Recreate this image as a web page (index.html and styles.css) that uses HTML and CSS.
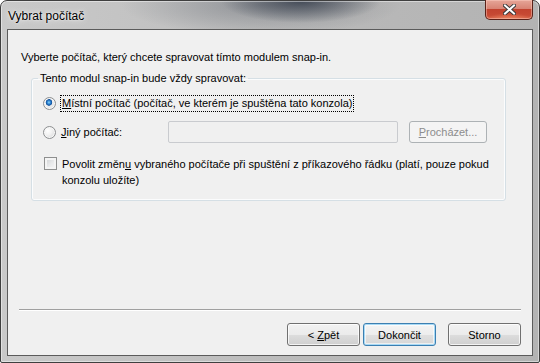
FILE: index.html
```html
<!DOCTYPE html>
<html lang="cs">
<head>
  <meta charset="UTF-8" />
  <title>Vybrat počítač</title>
  <link rel="stylesheet" href="styles.css">
</head>
<body>
  <div class="window">
    <div class="titlebar">
      <span class="title">Vybrat počítač</span>
      <button class="close" title="Zavřít">
        <svg width="13" height="11" viewBox="0 0 13 11">
          <path d="M2 1.5 L11 9.5 M11 1.5 L2 9.5" stroke="#3a3a3a" stroke-width="4" stroke-linecap="square" fill="none"/>
          <path d="M2 1.5 L11 9.5 M11 1.5 L2 9.5" stroke="#ffffff" stroke-width="2" stroke-linecap="square" fill="none"/>
        </svg>
      </button>
    </div>

    <div class="client">
      <p class="intro">Vyberte počítač, který chcete spravovat tímto modulem snap-in.</p>

      <!-- Which computer -->
      <fieldset class="group">
        <legend>Tento modul snap-in bude vždy spravovat:</legend>

        <div class="row row-local">
          <input type="radio" name="pc" id="local" checked>
          <label for="local" class="focused"><u>M</u>ístní počítač (počítač, ve kterém je spuštěna tato konzola)</label>
        </div>

        <div class="row row-other">
          <input type="radio" name="pc" id="other">
          <label for="other" class="other-label"><u>J</u>iný počítač:</label>
          <input type="text" class="textbox" disabled>
          <button class="btn btn-browse" disabled><u>P</u>rocházet...</button>
        </div>

        <div class="row row-check">
          <input type="checkbox" id="allow">
          <label for="allow" class="check-label">Povolit změn<u>u</u> vybraného počítače při spuštění z příkazového řádku (platí, pouze pokud konzolu uložíte)</label>
        </div>
      </fieldset>

      <div class="separator"></div>

      <div class="buttons">
        <button class="btn">&lt; <u>Z</u>pět</button>
        <button class="btn btn-default">Dokončit</button>
        <button class="btn btn-cancel">Storno</button>
      </div>
    </div>
  </div>
</body>
</html>
```

FILE: styles.css
```css
body {
  margin: 0;
  font-family: "Liberation Sans", Arial, sans-serif;
  font-size: 11px;
  color: #000;
  background: #fff;
}

.window {
  box-sizing: border-box;
  width: 540px;
  height: 363px;
  display: flex;
  flex-direction: column;
  padding: 0 6px 6px 6px;
  border: 1px solid #3f3f3f;
  border-radius: 7px 7px 2px 2px;
  background:
    radial-gradient(ellipse 80px 22px at 300px 0, rgba(52, 60, 74, 0.85), rgba(52, 60, 74, 0) 100%),
    radial-gradient(ellipse 140px 30px at 260px 4px, rgba(90, 96, 106, 0.45), rgba(90, 96, 106, 0) 100%),
    linear-gradient(to right, #c9c9c9 0%, #c2c2c2 30%, #b9b9b9 60%, #b3b3b3 100%);
  box-shadow: inset 0 0 0 1px rgba(255, 255, 255, 0.45);
}

.titlebar {
  height: 28px;
  display: flex;
  align-items: center;
  padding-left: 1px;
}

.title {
  font-family: "Liberation Sans", Arial, sans-serif;
  font-size: 12px;
  color: #000;
  text-shadow: 0 0 6px rgba(255, 255, 255, 0.9), 0 0 2px rgba(255, 255, 255, 0.8);
  margin-top: 1px;
}

.close {
  margin-left: auto;
  align-self: flex-start;
  margin-top: -1px;
  width: 48px;
  height: 20px;
  padding: 0;
  border: 1px solid #5a2219;
  border-top: none;
  border-radius: 0 0 5px 5px;
  display: flex;
  align-items: center;
  justify-content: center;
  background:
    radial-gradient(ellipse 22px 6px at 50% 100%, rgba(240, 140, 100, 0.8), rgba(240, 140, 100, 0)),
    linear-gradient(to bottom, #e6a698 0%, #d88474 45%, #c2432f 50%, #c74a34 80%, #d6654b 100%);
  box-shadow: inset 0 0 0 1px rgba(255, 210, 200, 0.45);
}

.client {
  flex: 1;
  display: flex;
  flex-direction: column;
  background: #f0f0f0;
  border: 1px solid #5b5b5b;
  padding: 20px 11px 9px 11px;
}

.intro {
  margin: 0;
  padding-left: 2px;
  line-height: 15px;
}

.group {
  box-sizing: border-box;
  width: 475px;
  margin: 6px 0 0 12px;
  padding: 0 10px 12px 11px;
  border: 1px solid #d5dfe5;
  border-radius: 3px;
  box-shadow: inset 0 0 0 1px #fbfcfd;
}

.group legend {
  padding: 0 2px;
  margin-left: -5px;
  line-height: 15px;
}

.row {
  display: flex;
  align-items: center;
}

.row-local {
  margin-top: 7px;
  height: 20px;
}

.row-other {
  margin-top: 8px;
  height: 22px;
}

.row-check {
  margin-top: 13px;
  align-items: flex-start;
}

input[type="radio"] {
  appearance: none;
  box-sizing: border-box;
  width: 13px;
  height: 13px;
  margin: 0 5px 0 0;
  border: 1px solid #8d8f91;
  border-radius: 50%;
  background: radial-gradient(circle at 35% 35%, #ffffff 0%, #f1f1f1 40%, #cfd0d1 100%);
  box-shadow: inset 0 0 0 1px #f7f7f7;
}

input[type="radio"]:checked {
  background:
    radial-gradient(circle at 45% 40%, #8fd9fb 0, #2f86d4 1.6px, #114f99 3px, rgba(17, 79, 153, 0) 3.6px),
    radial-gradient(circle at 35% 35%, #ffffff 0%, #f1f1f1 40%, #cfd0d1 100%);
}

input[type="checkbox"] {
  appearance: none;
  box-sizing: border-box;
  width: 13px;
  height: 13px;
  margin: 1px 5px 0 1px;
  border: 1px solid #8e8f8f;
  background: linear-gradient(135deg, #cdcfd2 0%, #e9eaeb 55%, #f8f8f8 100%);
  box-shadow: inset 0 0 0 2px #f4f4f4;
  flex: none;
}

label {
  line-height: 15px;
}

.focused {
  outline: 1px dotted #000;
  outline-offset: 0;
  padding: 0 1px;
}

.other-label {
  width: 107px;
}

.check-label {
  width: 432px;
  line-height: 16px;
}

.textbox {
  box-sizing: border-box;
  width: 230px;
  height: 22px;
  margin: 0;
  border: 1px solid #c9cbcf;
  border-radius: 2px;
  background: #f0f0f0;
}

.btn {
  box-sizing: border-box;
  width: 73px;
  height: 23px;
  padding: 0;
  font-family: "Liberation Sans", Arial, sans-serif;
  font-size: 11px;
  color: #000;
  border: 1px solid #707070;
  border-radius: 3px;
  background: linear-gradient(to bottom, #f2f2f2 0%, #ebebeb 50%, #dddddd 51%, #cfcfcf 100%);
  box-shadow: inset 0 0 0 1px rgba(255, 255, 255, 0.75);
}

.btn-browse {
  width: 78px;
  height: 22px;
  margin-left: 11px;
  color: #8d8d8d;
  border-color: #adb2b5;
  background: #f4f4f4;
  box-shadow: none;
}

.separator {
  margin-top: auto;
  border-top: 1px solid #a0a0a0;
  border-bottom: 1px solid #ffffff;
}

.buttons {
  display: flex;
  justify-content: flex-end;
  gap: 3px;
  margin-top: 12px;
}

.btn-default {
  border-color: #3c7fb1;
  box-shadow: inset 0 0 0 1px #a7d9f5, inset 0 0 0 2px rgba(255, 255, 255, 0.6);
  background: linear-gradient(to bottom, #f4f4f4 0%, #ededed 50%, #e0e0e0 51%, #d6d6d6 100%);
}

.btn-cancel {
  margin-left: 9px;
}
```
